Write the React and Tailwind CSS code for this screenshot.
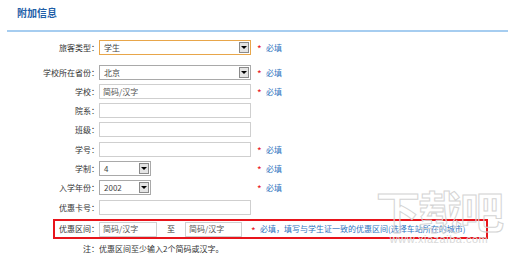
import React from "react";

const Required = ({ text = "必填" }) => (
  <div className="flex items-center ml-[6px]">
    <span className="text-[#e8141b] text-[10px] leading-none mt-[3px] w-[9px]">*</span>
    <span className="text-[#2e74c0] text-[8px] leading-none">{text}</span>
  </div>
);

const Input = ({ value = "", width = "w-[152px]" }) => (
  <div className={`${width} h-[15px] border border-[#cfcfcf] bg-white flex items-center pl-[3px] text-[8px] text-[#555] leading-none`}>
    {value}
  </div>
);

const Select = ({ value, width = "w-[152px]", active = false }) => (
  <div
    className={`${width} h-[15px] border ${
      active ? "border-[#e8a64a]" : "border-[#a9a9a9]"
    } bg-white flex items-center justify-between pl-[4px] pr-[1px] text-[8px] text-[#444] leading-none`}
  >
    <span>{value}</span>
    <div className="w-[10px] h-[11px] border border-[#8a8a8a] bg-[#e4e4e4] flex items-center justify-center">
      <div className="w-0 h-0 border-l-[3px] border-r-[3px] border-t-[3px] border-l-transparent border-r-transparent border-t-black" />
    </div>
  </div>
);

const Row = ({ label, className = "", children }) => (
  <div className={`flex items-center h-[15px] ${className}`}>
    <div className="w-[99px] text-right text-[8px] text-[#333] leading-none whitespace-nowrap">
      {label}
    </div>
    {children}
  </div>
);

export default function App() {
  return (
    <div className="relative w-[508px] h-[256px] bg-white overflow-hidden font-['Noto_Sans_CJK_SC','Noto_Sans',sans-serif]">
      {/* TITLE */}
      <div className="h-[30px] pt-[7px] pl-[17px]">
        <h2 className="text-[10px] leading-[12px] font-bold text-[#1f5fa8]">附加信息</h2>
      </div>
      <div className="ml-[7px] h-[2px] bg-[#a6cdf0]" />

      {/* FORM */}
      <Row label="旅客类型：" className="mt-[8px]">
        <Select value="学生" active />
        <Required />
      </Row>
      <Row label="学校所在省份：" className="mt-[10px]">
        <Select value="北京" />
        <Required />
      </Row>
      <Row label="学校：" className="mt-[4px]">
        <Input value="简码/汉字" />
        <Required />
      </Row>
      <Row label="院系：" className="mt-[4px]">
        <Input />
      </Row>
      <Row label="班级：" className="mt-[4px]">
        <Input />
      </Row>
      <Row label="学号：" className="mt-[5px]">
        <Input />
        <Required />
      </Row>
      <Row label="学制：" className="mt-[4px]">
        <Select value="4" width="w-[52px]" />
        <div className="w-[100px]" />
        <Required />
      </Row>
      <Row label="入学年份：" className="mt-[4px]">
        <Select value="2002" width="w-[52px]" />
        <div className="w-[100px]" />
        <Required />
      </Row>
      <Row label="优惠卡号：" className="mt-[5px]">
        <Input />
      </Row>

      {/* DISCOUNT RANGE */}
      <div className="mt-[4px] ml-[53px] w-[435px] h-[20px] border-2 border-[#e8141b] flex items-center">
        <div className="w-[44px] text-right text-[8px] text-[#333] leading-none whitespace-nowrap">优惠区间：</div>
        <Input value="简码/汉字" width="w-[58px]" />
        <div className="w-[28px] text-center text-[8px] text-[#333] leading-none">至</div>
        <Input value="简码/汉字" width="w-[57px]" />
        <div className="ml-[9px] flex items-center">
          <span className="text-[#e8141b] text-[10px] leading-none mt-[3px] w-[9px]">*</span>
          <span className="text-[#2e74c0] text-[8px] leading-none whitespace-nowrap">
            必填，填写与学生证一致的优惠区间(选择车站所在的城市)
          </span>
        </div>
      </div>

      <div className="mt-[4px] flex items-center h-[11px]">
        <div className="w-[99px] text-right text-[8px] text-[#333] leading-none">注：</div>
        <div className="text-[8px] text-[#333] leading-none">优惠区间至少输入2个简码或汉字。</div>
      </div>

      {/* WATERMARK */}
      <div className="absolute left-[376px] top-[188px] flex flex-col items-center pointer-events-none">
        <div className="text-[44px] leading-none font-bold text-transparent tracking-[-2px] [-webkit-text-stroke:1px_#d4d4d4]">
          下载吧
        </div>
        <div className="mt-[2px] text-[11px] leading-none text-[#d8d8d8] font-['Liberation_Sans',sans-serif] tracking-[0.5px]">
          www.xiazaiba.com
        </div>
      </div>
    </div>
  );
}
